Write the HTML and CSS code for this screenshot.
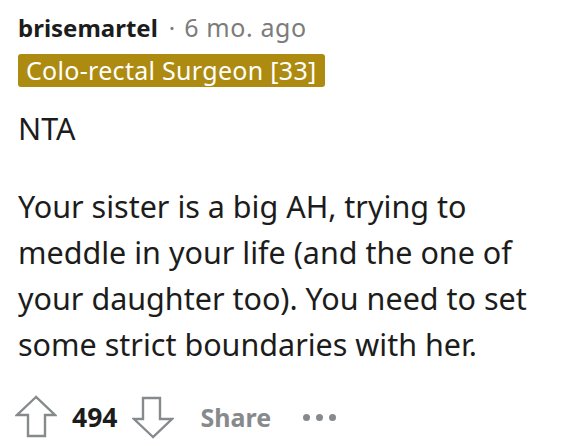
FILE: index.html
```html
<!DOCTYPE html>
<html>
<head>
<meta charset="utf-8">
<link rel="stylesheet" href="styles.css">
</head>
<body>
<div class="comment">
  <div class="meta">
    <span class="author">brisemartel</span>
    <span class="dot">·</span>
    <span class="time">6 mo. ago</span>
  </div>
  <div class="flair">Colo-rectal Surgeon [33]</div>
  <div class="body">
    <p>NTA</p>
    <p>Your sister is a big AH, trying to meddle in your life (and the one of your daughter too). You need to set some strict boundaries with her.</p>
  </div>
  <div class="actions">
    <svg class="arrow" width="42" height="44" viewBox="0 0 42 44"><path d="M21 2 L2 20 L13 20 L13 41 L30 41 L30 20 L40 20 Z" fill="none" stroke="#878a8c" stroke-width="2.4" stroke-linejoin="miter"/></svg>
    <span class="score">494</span>
    <svg class="arrow" width="42" height="44" viewBox="0 0 42 44"><path d="M21 42 L2 24 L11 24 L11 3 L28 3 L28 24 L40 24 Z" fill="none" stroke="#878a8c" stroke-width="2.4" stroke-linejoin="miter"/></svg>
    <span class="share">Share</span>
    <span class="more"><i></i><i></i><i></i></span>
  </div>
</div>
</body>
</html>
```
FILE: styles.css
```css
html, body {
  margin: 0;
  padding: 0;
  background: #ffffff;
}
.comment {
  padding: 12px 42px 0 18px;
  font-family: "Noto Sans", "Open Sans", sans-serif;
  color: #1c1c1c;
}
.meta {
  font-size: 24px;
  line-height: 30px;
  display: flex;
  align-items: baseline;
}
.author {
  font-weight: 700;
  color: #1c1c1c;
}
.dot {
  color: #7c7c7c;
  margin: 0 9px 0 11px;
}
.time {
  color: #7c7c7c;
  font-size: 25px;
  letter-spacing: 0.6px;
}
.flair {
  width: fit-content;
  margin-top: 11px;
  background: #ad8b10;
  color: #ffffff;
  font-size: 25px;
  letter-spacing: 0.3px;
  line-height: 33px;
  padding: 0 8px;
  border-radius: 3px;
}
.body {
  margin-top: 18px;
  font-size: 30.5px;
  line-height: 46px;
  color: #1c1c1c;
}
.body p {
  margin: 0 0 32px 0;
}
.body p:last-child {
  margin-bottom: 0;
}
.actions {
  display: flex;
  align-items: center;
  margin: 28px 0 0 -3px;
  height: 44px;
}
.arrow {
  display: block;
}
.score {
  font-weight: 700;
  font-size: 26.5px;
  color: #1c1c1c;
  margin: 0 15px 0 15px;
}
.share {
  font-weight: 700;
  font-size: 25px;
  color: #878a8c;
  margin-left: 26px;
}
.more {
  display: flex;
  gap: 6px;
  margin-left: 32px;
}
.more i {
  display: block;
  width: 7px;
  height: 7px;
  border-radius: 50%;
  background: #878a8c;
}
```
